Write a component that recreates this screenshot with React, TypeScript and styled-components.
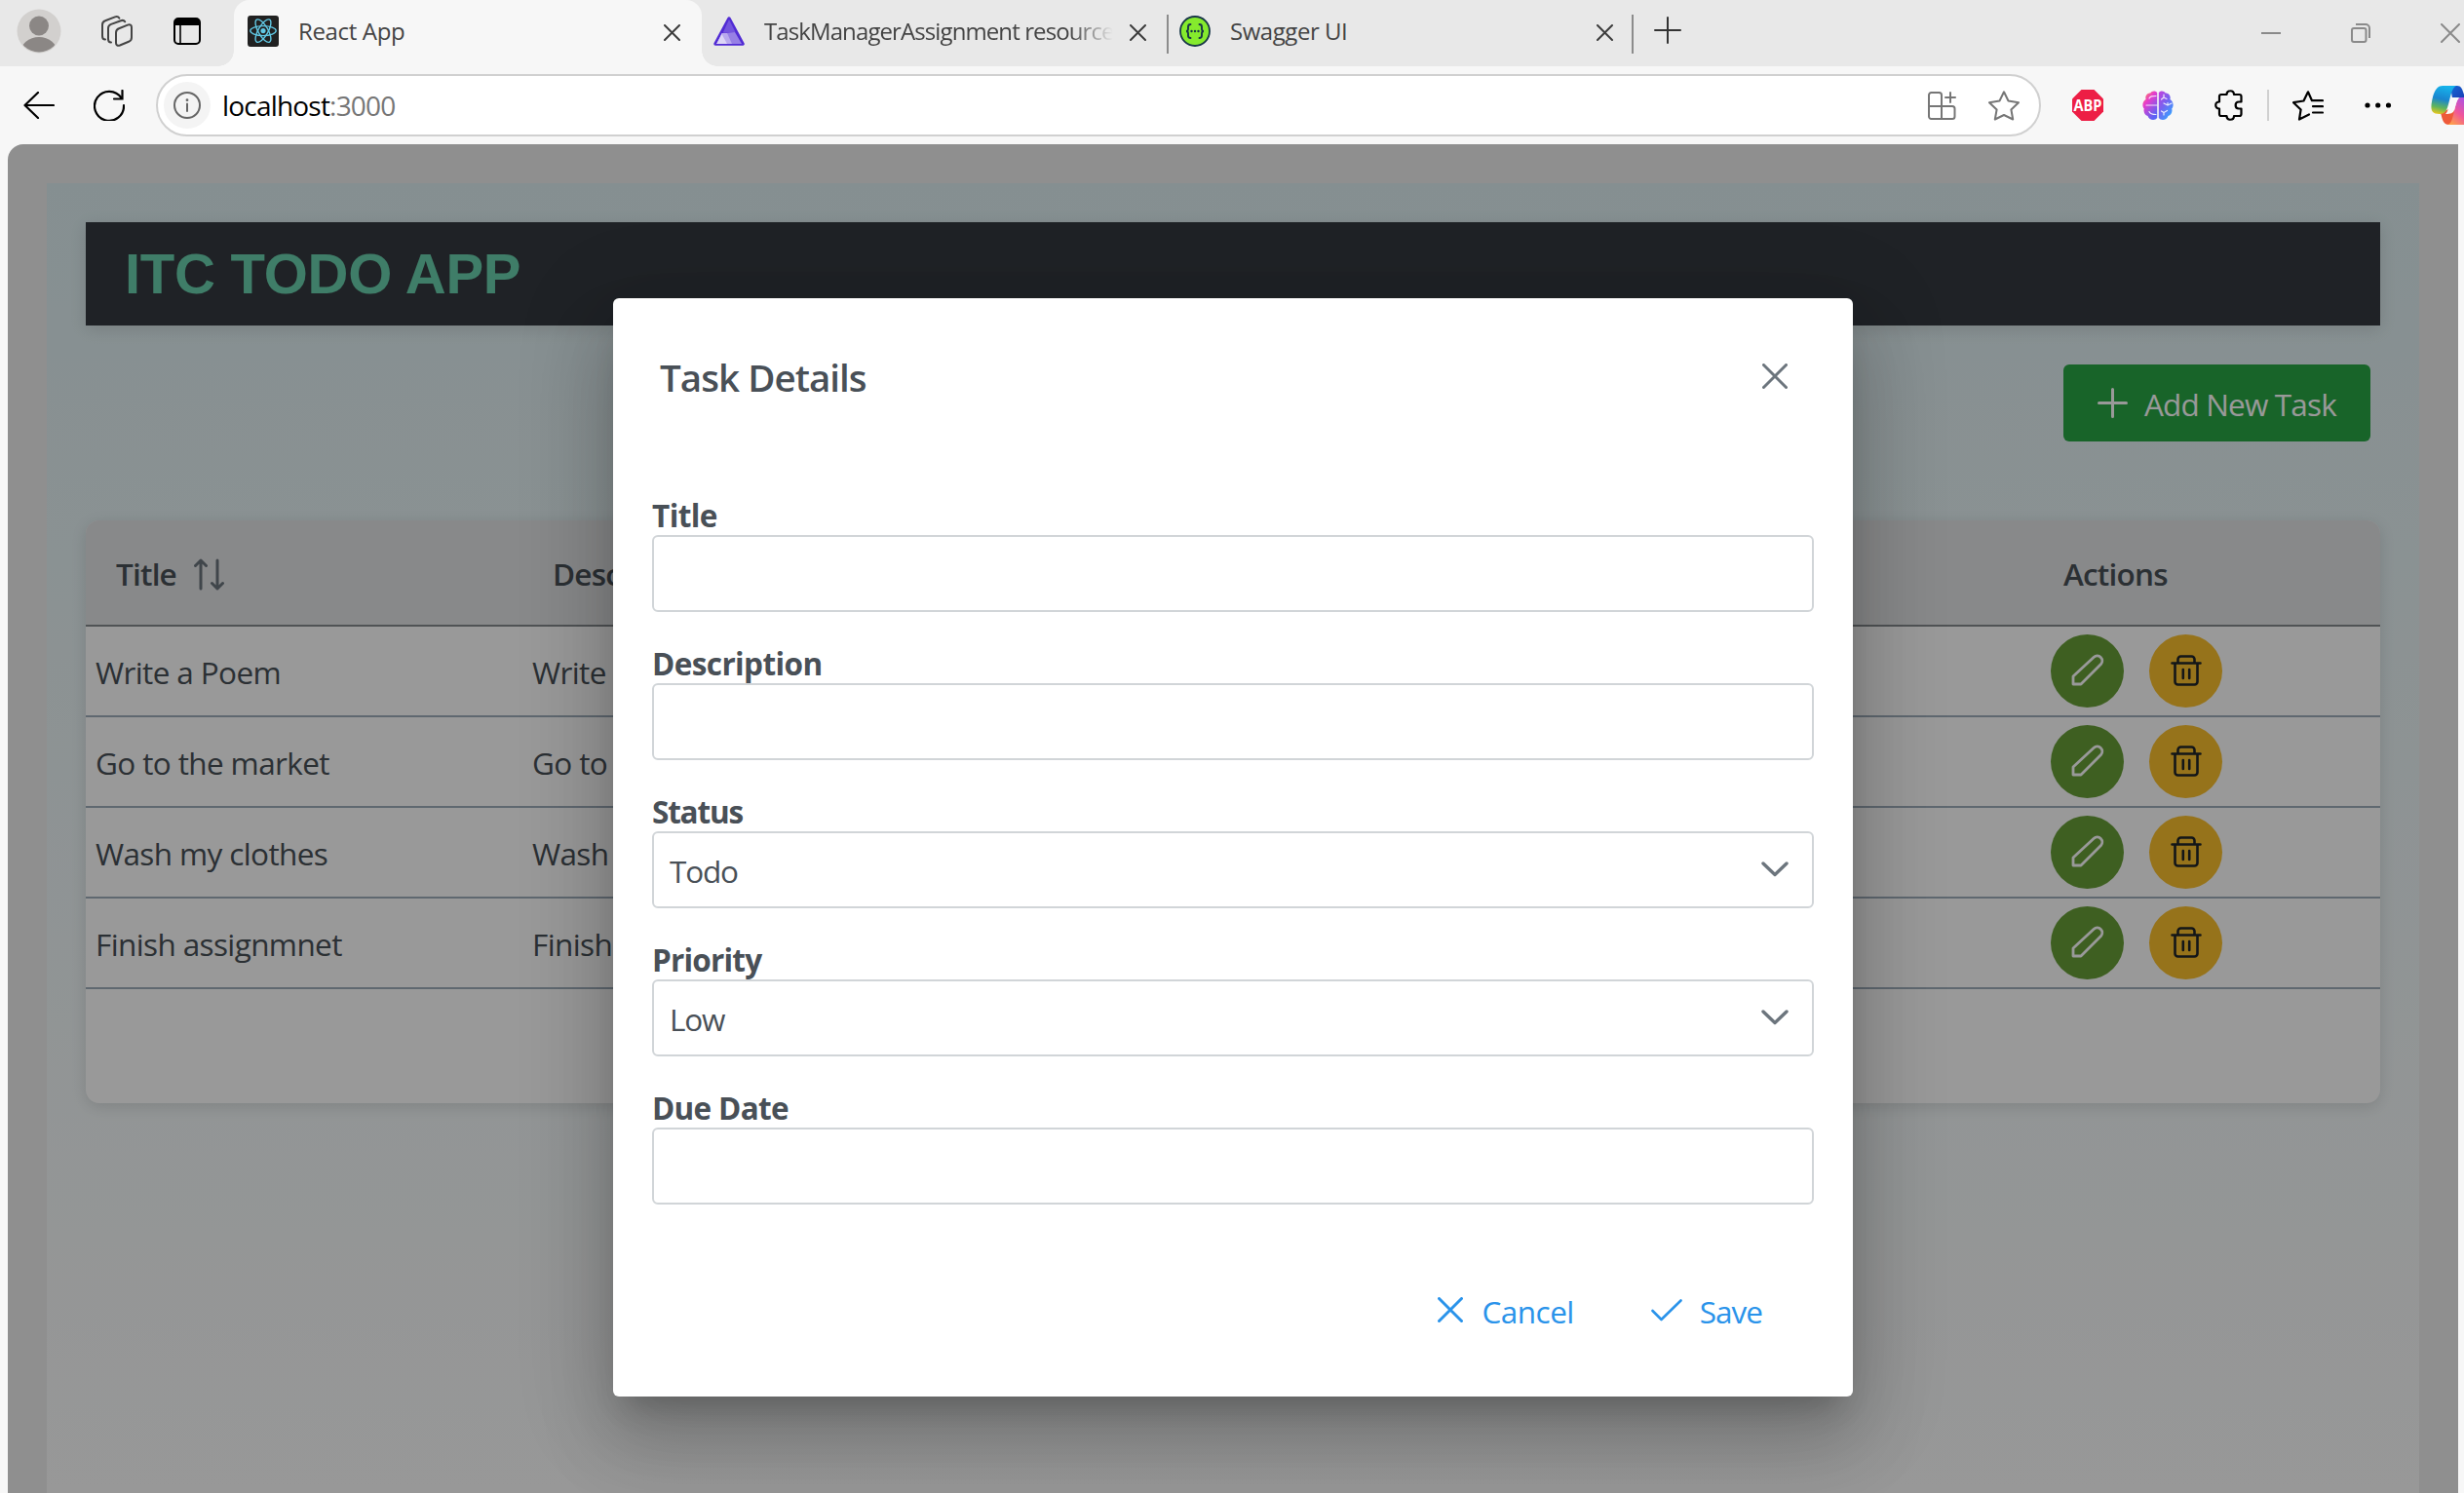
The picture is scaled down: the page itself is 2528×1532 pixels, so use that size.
import React from "react";
import styled, { createGlobalStyle, css } from "styled-components";

const Global = createGlobalStyle`
  *, *::before, *::after { box-sizing: border-box; }
  html, body { margin: 0; padding: 0; overflow: hidden; background: #f7f7f7; }
  body { font-family: "Open Sans", "Noto Sans", sans-serif; }
  svg { display: block; flex: none; }
`;

const ui = `"Open Sans", "Noto Sans", sans-serif`;

const Window = styled.div`
  width: 2528px;
  height: 1532px;
  display: flex;
  flex-direction: column;
  overflow: hidden;
  background: #f7f7f7;
  font-family: ${ui};
`;

const TabStrip = styled.div`
  height: 68px;
  flex: none;
  display: flex;
  align-items: stretch;
  background: #e8e8e8;
`;

const StripTools = styled.div`
  width: 240px;
  display: flex;
  align-items: center;
  gap: 42px;
  padding: 0 0 4px 17px;
  & > svg:first-child { margin-right: -1px; }
`;

const Tab = styled.div<{ $active?: boolean; $width: number; $pad: number; $end: number }>`
  position: relative;
  width: ${(p) => p.$width}px;
  display: flex;
  align-items: center;
  padding: 0 ${(p) => p.$end}px 4px ${(p) => p.$pad}px;
  color: #3c3c3c;
  & > svg:last-child { margin-top: 2px; }
  ${(p) =>
    p.$active &&
    css`
      background: #f7f7f7;
      border-radius: 16px 16px 0 0;
      &::before,
      &::after {
        content: "";
        position: absolute;
        bottom: 0;
        width: 16px;
        height: 16px;
      }
      &::before {
        left: -16px;
        background: radial-gradient(circle at 0 0, transparent 15.5px, #f7f7f7 16px);
      }
      &::after {
        right: -16px;
        background: radial-gradient(circle at 100% 0, transparent 15.5px, #f7f7f7 16px);
      }
    `}
`;

const TabTitle = styled.span<{ $ls: number; $fade?: boolean }>`
  flex: 1;
  margin-left: 20px;
  margin-right: 10px;
  overflow: hidden;
  white-space: nowrap;
  font-size: 24px;
  line-height: 34px;
  color: #444;
  letter-spacing: ${(p) => p.$ls}px;
  ${(p) => p.$fade && css`
    mask-image: linear-gradient(90deg, #000 86%, transparent 98%);
  `}
`;

const TabDivider = styled.span`
  width: 2px;
  height: 40px;
  margin-top: 15px;
  background: #8c8c8c;
`;

const NewTab = styled.div`
  display: flex;
  align-items: center;
  padding: 0 0 6px 21px;
  flex: 1;
  color: #333;
`;

const Controls = styled.div`
  display: flex;
  align-items: center;
  gap: 72px;
  padding-right: 4px;
  color: #8a8a8a;
`;

const Toolbar = styled.div`
  height: 80px;
  flex: none;
  display: flex;
  align-items: center;
  padding-left: 24px;
`;

const NavButtons = styled.div`
  display: flex;
  align-items: center;
  gap: 40px;
  width: 136px;
`;

const AddressBar = styled.div`
  width: 1934px;
  height: 64px;
  display: flex;
  align-items: center;
  padding: 0 20px 0 6px;
  border: 2px solid #d0d0d0;
  border-radius: 32px;
  background: #fff;
`;

const InfoBadge = styled.span`
  width: 48px;
  height: 48px;
  border-radius: 50%;
  display: flex;
  align-items: center;
  justify-content: center;
  background: #f4f4f4;
`;

const Url = styled.span`
  flex: 1;
  margin-left: 12px;
  font-size: 28px;
  line-height: 40px;
  letter-spacing: -0.8px;
  color: #000;
`;

const Port = styled.span`
  color: #767676;
`;

const BarActions = styled.div`
  display: flex;
  align-items: center;
  gap: 33px;
`;

const Extensions = styled.div`
  flex: 1;
  display: flex;
  align-items: center;
  padding-left: 32px;
`;

const Slot = styled.span<{ $w: number }>`
  width: ${(p) => p.$w}px;
  flex: none;
  display: flex;
  align-items: center;
`;

const ToolDivider = styled.span`
  width: 2px;
  height: 32px;
  background: #d0d0d0;
`;

const Viewport = styled.div`
  position: relative;
  width: 2514px;
  height: 1384px;
  margin-left: 8px;
  overflow: hidden;
  border-radius: 16px 0 0 0;
  background: #eee;
  padding: 40px 40px 0;
`;

const AppBody = styled.main`
  height: 1400px;
  padding: 40px;
  display: flex;
  flex-direction: column;
  background: linear-gradient(180deg, #deeff2 0, #fdfdfd 1340px);
`;

const Banner = styled.header`
  height: 106px;
  flex: none;
  display: flex;
  align-items: center;
  padding: 0 40px;
  background: #343a40;
  box-shadow: 0 4px 16px rgba(0, 0, 0, 0.12);
`;

const Brand = styled.h1`
  margin: 0;
  font-family: "Liberation Sans", Arial, sans-serif;
  font-weight: 700;
  font-size: 58px;
  line-height: 66px;
  color: #69d0ad;
  letter-spacing: -0.25px;
`;

const Actions = styled.div`
  display: flex;
  justify-content: flex-end;
  margin: 40px 10px 81px 0;
`;

const AddButton = styled.button`
  width: 315px;
  height: 79px;
  display: flex;
  align-items: center;
  padding: 0 0 0 35px;
  gap: 17px;
  border: 0;
  border-radius: 6px;
  background: #28a745;
  color: #fff;
  font-family: ${ui};
  font-size: 31.5px;
  line-height: 44px;
  letter-spacing: -0.85px;
  white-space: nowrap;
  & > span { padding-top: 3px; }
`;

const Table = styled.section`
  height: 598px;
  flex: none;
  overflow: hidden;
  background: #fff;
  border-radius: 14px;
  box-shadow: 0 4px 16px rgba(0, 0, 0, 0.12);
`;

const rowGrid = css`
  display: grid;
  grid-template-columns: 448px 1550px 1fr;
  align-items: center;
`;

const HeadRow = styled.div`
  ${rowGrid}
  height: 109px;
  background: #e3e4e6;
  border-bottom: 2px solid #868b8e;
`;

const HeadCell = styled.div`
  display: flex;
  align-items: center;
  gap: 18px;
  padding: 3px 31px 0;
  font-weight: 600;
  font-size: 31.5px;
  line-height: 44px;
  letter-spacing: -0.8px;
  color: #495057;
`;

const Row = styled.div`
  ${rowGrid}
  height: 93px;
  border-bottom: 2px solid #9eadbb;
`;

const Cell = styled.div`
  display: flex;
  align-items: center;
  padding: 2px 10px 0;
  font-size: 31.5px;
  line-height: 44px;
  letter-spacing: -0.62px;
  color: #495057;
`;

const ActionCell = styled.div`
  display: flex;
  gap: 26px;
  padding: 0 18px;
`;

const RoundButton = styled.button<{ $bg: string; $fg: string }>`
  width: 75px;
  height: 75px;
  display: flex;
  align-items: center;
  justify-content: center;
  padding: 0 0 2px;
  border: 0;
  border-radius: 50%;
  background: ${(p) => p.$bg};
  color: ${(p) => p.$fg};
`;

const Mask = styled.div`
  position: absolute;
  inset: 0;
  display: flex;
  justify-content: center;
  align-items: flex-start;
  padding-top: 158px;
  background: rgba(0, 0, 0, 0.4);
`;

const Dialog = styled.div`
  width: 1272px;
  height: 1127px;
  display: flex;
  flex-direction: column;
  padding: 0 40px;
  border-radius: 6px;
  background: #fff;
  box-shadow: 0 22px 30px -14px rgba(0, 0, 0, 0.2), 0 48px 76px 6px rgba(0, 0, 0, 0.14),
    0 18px 92px 16px rgba(0, 0, 0, 0.12);
`;

const DialogHead = styled.div`
  height: 200px;
  flex: none;
  margin-top: 43px;
  margin-bottom: -43px;
  display: flex;
  justify-content: space-between;
  align-items: flex-start;
  padding: 10px 27px 0 8px;
  color: #6c757d;
  & > svg { margin-top: 14px; }
`;

const DialogTitle = styled.h2`
  margin: 0;
  font-weight: 600;
  font-size: 38.5px;
  line-height: 56px;
  letter-spacing: -0.95px;
  color: #495057;
`;

const Field = styled.div`
  height: 152px;
  flex: none;
  display: flex;
  flex-direction: column;
`;

const Label = styled.label<{ $ls: number }>`
  height: 43px;
  font-weight: 700;
  font-size: 31.5px;
  line-height: 45px;
  letter-spacing: ${(p) => p.$ls}px;
  color: #495057;
`;

const Control = styled.div`
  height: 79px;
  display: flex;
  align-items: center;
  justify-content: space-between;
  padding: 2px 24px 0 16px;
  border: 2px solid #d1d5d8;
  border-radius: 6px;
  background: #fff;
  font-size: 31.5px;
  line-height: 44px;
  letter-spacing: -1.2px;
  color: #495057;
  & > svg { margin-bottom: 4px; }
`;

const DialogFoot = styled.div`
  display: flex;
  justify-content: flex-end;
  gap: 79px;
  padding: 58px 53px 0 0;
`;

const TextButton = styled.button<{ $gap: number; $ls: number }>`
  display: flex;
  align-items: center;
  gap: ${(p) => p.$gap}px;
  padding: 0;
  border: 0;
  background: none;
  color: #2a93ea;
  font-family: ${ui};
  font-size: 31.5px;
  line-height: 44px;
  letter-spacing: ${(p) => p.$ls}px;
  & > svg { margin-bottom: 4px; }
`;

const Cross = ({ size, w = 2 }: { size: number; w?: number }) => (
  <svg width={size} height={size} viewBox={`0 0 ${size} ${size}`} stroke="currentColor" strokeWidth={w} strokeLinecap="round">
    <path d={`M${w / 2} ${w / 2}L${size - w / 2} ${size - w / 2}M${size - w / 2} ${w / 2}L${w / 2} ${size - w / 2}`} />
  </svg>
);

const Avatar = () => (
  <svg width="46" height="46" viewBox="0 0 46 46">
    <defs><clipPath id="av"><circle cx="23" cy="23" r="21.5" /></clipPath></defs>
    <circle cx="23" cy="23" r="22.5" fill="#d2d0ce" />
    <circle cx="23" cy="17.5" r="10" fill="#8b8785" />
    <ellipse cx="23" cy="45" rx="19" ry="16" fill="#8b8785" clipPath="url(#av)" />
  </svg>
);

const Workspaces = () => (
  <svg width="32" height="32" viewBox="0 0 32 32" fill="none" stroke="#444" strokeWidth="2" strokeLinecap="round" strokeLinejoin="round">
    <path d="M4 24.5C2 24.5 1 23 1 21V9.500C1 7.500 2 6 4 5.300L14 1.400C16 .7 17.500 1.300 18.300 2.600" />
    <path d="M10 27.500C8 27.500 7 26 7 24V13C7 11 8 9.600 10 8.900L20 5.200C22 4.500 23.400 5 24.200 6.300" />
    <path d="M15 17.500C15 15.500 16 14 18 13.200L27 9.600C29.500 8.700 31 9.800 31 12V22.500C31 24.500 30 26 28 26.800L19 30.500C16.500 31.400 15 30.300 15 28Z" />
  </svg>
);

const TabMenu = () => (
  <svg width="28" height="28" viewBox="0 0 28 28">
    <rect x="1" y="1" width="26" height="26" rx="4" fill="none" stroke="#000" strokeWidth="2" />
    <path d="M1 8V5a4 4 0 0 1 4-4H23a4 4 0 0 1 4 4V8Z" fill="#000" />
    <path d="M7 8V27" stroke="#000" strokeWidth="1.600" />
  </svg>
);

const ReactLogo = () => (
  <svg width="32" height="32" viewBox="0 0 32 32" fill="none" stroke="#61c8e4" strokeWidth="1.400">
    <rect width="32" height="32" rx="3" fill="#212121" stroke="none" />
    <ellipse cx="16" cy="15.600" rx="13.200" ry="5" />
    <ellipse cx="16" cy="15.600" rx="13.200" ry="5" transform="rotate(60 16 15.600)" />
    <ellipse cx="16" cy="15.600" rx="13.200" ry="5" transform="rotate(120 16 15.600)" />
    <circle cx="16" cy="15.600" r="2.600" fill="#61c8e4" stroke="none" />
  </svg>
);

const AspireLogo = () => (
  <svg width="32" height="30" viewBox="0 0 32 30" strokeLinejoin="round">
    <path d="M16 2L30 28H2Z" fill="#6d48dc" stroke="#512bd4" strokeWidth="3.500" />
    <path d="M16 3L22.500 16H10Z" fill="#7455dd" />
    <path d="M8.500 17H16L23 28H3.500Z" fill="#b9a9ee" />
    <path d="M14 17L19 28H29L22 16Z" fill="#9780e5" />
    <path d="M8.500 18L14 28H3Z" fill="#dcd5f6" />
  </svg>
);

const SwaggerLogo = () => (
  <svg width="32" height="32" viewBox="0 0 32 32" fill="none">
    <circle cx="16" cy="16" r="15" fill="#85ea2d" stroke="#173647" strokeWidth="1.800" />
    <g stroke="#173647" strokeWidth="1.900" strokeLinecap="round">
      <path d="M11.500 9C9.500 9 9 10 9 11.500V13.500C9 15 8.500 16 7 16C8.500 16 9 17 9 18.500V20.500C9 22 9.500 23 11.500 23" />
      <path d="M20.500 9C22.500 9 23 10 23 11.500V13.500C23 15 23.500 16 25 16C23.500 16 23 17 23 18.500V20.500C23 22 22.500 23 20.500 23" />
    </g>
    <g fill="#173647"><circle cx="12.500" cy="16" r="1.200" /><circle cx="16" cy="16" r="1.200" /><circle cx="19.500" cy="16" r="1.200" /></g>
  </svg>
);

const PlusIcon = ({ size, w }: { size: number; w: number }) => (
  <svg width={size} height={size} viewBox={`0 0 ${size} ${size}`} stroke="currentColor" strokeWidth={w} strokeLinecap="round">
    <path d={`M${size / 2} ${w / 2}V${size - w / 2}M${w / 2} ${size / 2}H${size - w / 2}`} />
  </svg>
);

const BackIcon = () => (
  <svg width="32" height="28" viewBox="0 0 32 28" fill="none" stroke="#000" strokeWidth="2.200" strokeLinecap="round" strokeLinejoin="round">
    <path d="M15 1L1.500 14L15 27M1.500 14H31" />
  </svg>
);

const ReloadIcon = () => (
  <svg width="32" height="32" viewBox="0 0 32 32" fill="none" stroke="#000" strokeWidth="2.200" strokeLinecap="round">
    <path d="M31 16A15 15 0 1 1 28.500 8.500M29.500 1V9.500H21" />
  </svg>
);

const InfoIcon = () => (
  <svg width="28" height="28" viewBox="0 0 28 28" fill="none" stroke="#666" strokeWidth="2">
    <circle cx="14" cy="14" r="13" />
    <path d="M14 12.500V20" strokeLinecap="round" />
    <circle cx="14" cy="8.700" r="1.400" fill="#666" stroke="none" />
  </svg>
);

const AppsIcon = () => (
  <svg width="29" height="29" viewBox="0 0 29 29" fill="none" stroke="#767676" strokeWidth="2" strokeLinecap="round">
    <path d="M14 15V3.500A2.500 2.500 0 0 0 11.500 1H3.500A2.500 2.500 0 0 0 1 3.500V25.500A2.500 2.500 0 0 0 3.500 28H25A2.500 2.500 0 0 0 27.500 25.500V17.500A2.500 2.500 0 0 0 25 15H1M14 15V28M23 1V11M18 6H28" />
  </svg>
);

const StarIcon = () => (
  <svg width="32" height="31" viewBox="0 0 32 31" fill="none" stroke="#767676" strokeWidth="2" strokeLinejoin="round">
    <path d="M16 1.300L20.500 10.500L31 12.200L23.400 19.500L25.200 29.500L16 25L6.800 29.500L8.600 19.500L1 12.200L11.500 10.500Z" />
  </svg>
);

const AbpIcon = () => (
  <svg width="32" height="32" viewBox="0 0 32 32">
    <path d="M9.500 0H22.500L32 9.500V22.500L22.500 32H9.500L0 22.500V9.500Z" fill="#ed1e45" />
    <text x="16" y="21.800" textAnchor="middle" fontFamily="Open Sans, sans-serif" fontWeight="700" fontSize="16.500" textLength="29" lengthAdjust="spacingAndGlyphs" fill="#fff">ABP</text>
  </svg>
);

const BrainIcon = () => (
  <svg width="32" height="32" viewBox="0 0 32 32" fill="none">
    <defs>
      <linearGradient id="bl" x1="0" y1="0" x2=".6" y2="1"><stop offset="0" stopColor="#ff9a3c" /><stop offset=".4" stopColor="#e83ccb" /><stop offset="1" stopColor="#5b63f5" /></linearGradient>
      <linearGradient id="br" x1="0" y1="0" x2=".7" y2="1"><stop offset="0" stopColor="#c641dd" /><stop offset=".5" stopColor="#7663f0" /><stop offset="1" stopColor="#35a4ff" /></linearGradient>
    </defs>
    <path d="M15.200 3C14 .8 9.500 .8 8.200 3.500C4.500 3.500 2.500 7 3.600 10C0 12 -.5 17 1.800 19.500C.8 23 2.500 26 5.500 27C7 31.500 13 32 15.200 29Z" fill="url(#bl)" />
    <path d="M16.800 3C18 .8 22.500 .8 23.800 3.500C27.500 3.500 29.500 7 28.400 10C32 12 32.500 17 30.200 19.500C31.200 23 29.500 26 26.500 27C25 31.500 19 32 16.800 29Z" fill="url(#br)" />
    <path d="M4 16H15M7 9C8 6.500 10 6.500 14 6.500M7 22.500C8 25 10 25.500 14 25.500M22 5V8M22 8L19.500 10M22 8L25 9.500M26 13.500V16M26 16L22 14M26 16L30 14M22 26V23.500M22 23.500L19.500 22M22 23.500L25.500 21.500" stroke="#fff" strokeOpacity=".85" strokeWidth="1.200" strokeLinecap="round" />
  </svg>
);

const PuzzleIcon = () => (
  <svg width="29" height="32" viewBox="0 0 29 32" fill="none" stroke="#000" strokeWidth="2.200" strokeLinejoin="round">
    <path d="M12.500 5C12.500 0 20 0 20 5H25.500A2 2 0 0 1 27.500 7V12.500H25C20.500 12.500 20.500 19.500 25 19.500H27.500V25A2 2 0 0 1 25.500 27H20C20 32 12.500 32 12.500 27H7A2 2 0 0 1 5 25V19.500C0 19.500 0 12.500 5 12.500V7A2 2 0 0 1 7 5Z" />
  </svg>
);

const FavoritesIcon = () => (
  <svg width="32" height="31" viewBox="0 0 32 31" fill="none" stroke="#000" strokeWidth="2.200" strokeLinejoin="round" strokeLinecap="round">
    <path d="M17 24.500L7 29.500L8.600 19.500L1 12.200L11.500 10.500L16 1.300L20 10.200H31M21 16.200H31M21 22.500H31" />
  </svg>
);

const DotsIcon = () => (
  <svg width="28" height="6" viewBox="0 0 28 6"><circle cx="3" cy="3" r="2.600" /><circle cx="13.700" cy="3" r="2.600" /><circle cx="24.500" cy="3" r="2.600" /></svg>
);

const CopilotIcon = () => (
  <svg width="34" height="40" viewBox="0 0 34 40">
    <defs>
      <linearGradient id="c1" x1=".4" y1="0" x2=".2" y2="1"><stop offset="0" stopColor="#17b2ea" /><stop offset=".45" stopColor="#1985cf" /><stop offset=".75" stopColor="#5fb45c" /><stop offset="1" stopColor="#f0c81a" /></linearGradient>
      <linearGradient id="c2" x1=".8" y1="0" x2=".3" y2="1"><stop offset="0" stopColor="#b452dc" /><stop offset=".5" stopColor="#f0569a" /><stop offset="1" stopColor="#ffa14a" /></linearGradient>
      <linearGradient id="c3" x1="0" y1="0" x2="1" y2="1"><stop offset="0" stopColor="#1568d6" /><stop offset="1" stopColor="#1b3fb5" /></linearGradient>
    </defs>
    <path d="M20 0H27C31 0 32 3 34 9V13H22Z" fill="url(#c3)" />
    <path d="M10 28C12 34 12 40 19 40C23 40 24 34 26 27L22 22Z" fill="#ee5a3a" />
    <path d="M34 12H31C27 12 26 18 24 26C22 34 21 40 16 40H34Z" fill="url(#c2)" />
    <path d="M12 0H26C22 2 21 8 19 15C17 23 16 29 9 29C2 29 0 26 .5 20C1.500 14 3 0 12 0Z" fill="url(#c1)" />
    <path d="M21 12H30C27 13 26 18 24 25C23 28 20 29 15 29C18 27 19 18 21 12Z" fill="#fafafa" />
  </svg>
);

const Minimize = () => (
  <svg width="20" height="20" viewBox="0 0 20 20"><path d="M0 10H20" stroke="#8a8a8a" strokeWidth="2" /></svg>
);
const Restore = () => (
  <svg width="20" height="20" viewBox="0 0 20 20" fill="none" stroke="#8a8a8a" strokeWidth="2">
    <rect x="1" y="5" width="14.500" height="14" rx="2" />
    <path d="M5 1H15A4 4 0 0 1 19 5V15" />
  </svg>
);

const SortIcon = () => (
  <svg width="31" height="33" viewBox="0 0 31 33" fill="none" stroke="#6c757d" strokeWidth="3" strokeLinecap="round" strokeLinejoin="round">
    <path d="M7 31V2M1.500 7.500L7 2L12.500 7.500M24 2V31M18.500 25.500L24 31L29.500 25.500" />
  </svg>
);

const PencilIcon = () => (
  <svg width="34" height="33" viewBox="0 0 34 33" fill="none" stroke="currentColor" strokeWidth="2.800" strokeLinejoin="round">
    <path d="M2 31V23L23.300 3.300a5.100 5.100 0 0 1 7.200 7.200L10 31Z" />
  </svg>
);

const TrashIcon = () => (
  <svg width="32" height="32" viewBox="0 0 32 32" fill="none" stroke="currentColor" strokeWidth="2.600" strokeLinecap="round" strokeLinejoin="round">
    <path d="M1.500 8.500H30.500M7.500 8.500V4.500A3 3 0 0 1 10.500 1.500H21.500A3 3 0 0 1 24.500 4.500V8.500M4.500 8.500V27.500A3 3 0 0 0 7.500 30.500H24.500A3 3 0 0 0 27.500 27.500V8.500M12.800 15V24M19.200 15V24" />
  </svg>
);

const ChevronIcon = () => (
  <svg width="28" height="16" viewBox="0 0 28 16" fill="none" stroke="#6c757d" strokeWidth="3.400" strokeLinecap="round" strokeLinejoin="round">
    <path d="M2 2L14 13.500L26 2" />
  </svg>
);

const CheckIcon = () => (
  <svg width="32" height="23" viewBox="0 0 32 23" fill="none" stroke="currentColor" strokeWidth="2.600" strokeLinecap="round" strokeLinejoin="round">
    <path d="M1.500 12L10.500 21L30.500 1.500" />
  </svg>
);

const tasks = [
  { title: "Write a Poem", description: "Write" },
  { title: "Go to the market", description: "Go to" },
  { title: "Wash my clothes", description: "Wash" },
  { title: "Finish assignmnet", description: "Finish" },
];

const fields = [
  { label: "Title", ls: -0.6 },
  { label: "Description", ls: -0.6 },
  { label: "Status", ls: -1.2, value: "Todo" },
  { label: "Priority", ls: -0.8, value: "Low" },
  { label: "Due Date", ls: -0.7 },
];

export default function App() {
  return (
    <Window>
      <Global />
      <TabStrip>
        <StripTools>
          <Avatar />
          <Workspaces />
          <TabMenu />
        </StripTools>
        <Tab $active $width={480} $pad={14} $end={22}>
          <ReactLogo />
          <TabTitle $ls={-0.35}>React App</TabTitle>
          <Cross size={17} />
        </Tab>
        <Tab $width={477} $pad={12} $end={21}>
          <AspireLogo />
          <TabTitle $ls={-0.9} $fade>TaskManagerAssignment resource</TabTitle>
          <Cross size={17} />
        </Tab>
        <TabDivider />
        <Tab $width={475} $pad={11} $end={19}>
          <SwaggerLogo />
          <TabTitle $ls={-0.45}>Swagger UI</TabTitle>
          <Cross size={17} />
        </Tab>
        <TabDivider />
        <NewTab><PlusIcon size={28} w={2} /></NewTab>
        <Controls>
          <Minimize />
          <Restore />
          <Cross size={20} />
        </Controls>
      </TabStrip>
      <Toolbar>
        <NavButtons>
          <BackIcon />
          <ReloadIcon />
        </NavButtons>
        <AddressBar>
          <InfoBadge><InfoIcon /></InfoBadge>
          <Url>localhost<Port>:3000</Port></Url>
          <BarActions><AppsIcon /><StarIcon /></BarActions>
        </AddressBar>
        <Extensions>
          <Slot $w={72}><AbpIcon /></Slot>
          <Slot $w={74}><BrainIcon /></Slot>
          <Slot $w={54}><PuzzleIcon /></Slot>
          <Slot $w={26}><ToolDivider /></Slot>
          <Slot $w={74}><FavoritesIcon /></Slot>
          <Slot $w={68}><DotsIcon /></Slot>
          <CopilotIcon />
        </Extensions>
      </Toolbar>
      <Viewport>
        <AppBody>
          <Banner><Brand>ITC TODO APP</Brand></Banner>
          <Actions>
            <AddButton><PlusIcon size={31} w={3} /><span>Add New Task</span></AddButton>
          </Actions>
          <Table>
            <HeadRow>
              <HeadCell>Title<SortIcon /></HeadCell>
              <HeadCell>Description</HeadCell>
              <HeadCell>Actions</HeadCell>
            </HeadRow>
            {tasks.map((task) => (
              <Row key={task.title}>
                <Cell>{task.title}</Cell>
                <Cell>{task.description}</Cell>
                <ActionCell>
                  <RoundButton $bg="#689f38" $fg="#fff"><PencilIcon /></RoundButton>
                  <RoundButton $bg="#fbc02d" $fg="#212529"><TrashIcon /></RoundButton>
                </ActionCell>
              </Row>
            ))}
          </Table>
        </AppBody>
        <Mask>
          <Dialog>
            <DialogHead>
              <DialogTitle>Task Details</DialogTitle>
              <Cross size={26} w={3} />
            </DialogHead>
            {fields.map((f) => (
              <Field key={f.label}>
                <Label $ls={f.ls}>{f.label}</Label>
                <Control>
                  {f.value}
                  {f.value && <ChevronIcon />}
                </Control>
              </Field>
            ))}
            <DialogFoot>
              <TextButton $gap={19} $ls={-0.5}><Cross size={26} w={3} />Cancel</TextButton>
              <TextButton $gap={18} $ls={-1}><CheckIcon />Save</TextButton>
            </DialogFoot>
          </Dialog>
        </Mask>
      </Viewport>
    </Window>
  );
}
